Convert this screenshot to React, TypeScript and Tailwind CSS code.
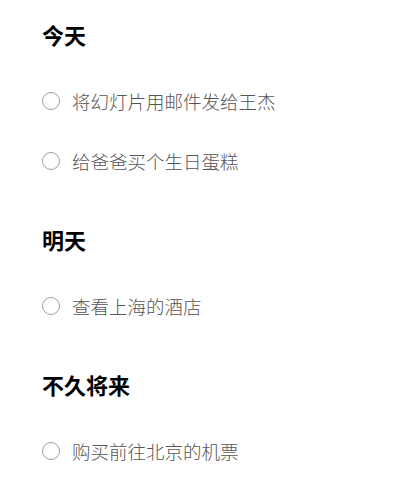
const sections = [
  {
    title: "今天",
    items: ["将幻灯片用邮件发给王杰", "给爸爸买个生日蛋糕"],
  },
  {
    title: "明天",
    items: ["查看上海的酒店"],
  },
  {
    title: "不久将来",
    items: ["购买前往北京的机票"],
  },
];

const fontStack = {
  fontFamily: '"Noto Sans CJK SC", "Noto Sans", sans-serif',
};

export default function App() {
  return (
    <div
      className="min-h-[497px] bg-white pl-[42px] pr-6 pt-[22px]"
      style={fontStack}
    >
      <div className="flex flex-col gap-[36px]">
        {sections.map((section) => (
          <section key={section.title}>
            <h2 className="mb-[21px] h-7 text-[22px] leading-[24px] font-bold text-black">
              {section.title}
            </h2>
            <ul>
              {section.items.map((item) => (
                <li key={item} className="flex h-[60px] items-center gap-3">
                  <span className="h-[18px] w-[18px] shrink-0 rounded-full border border-gray-400 bg-white" />
                  <span className="text-[18.5px] leading-6 font-light text-[#555555]">
                    {item}
                  </span>
                </li>
              ))}
            </ul>
          </section>
        ))}
      </div>
    </div>
  );
}
